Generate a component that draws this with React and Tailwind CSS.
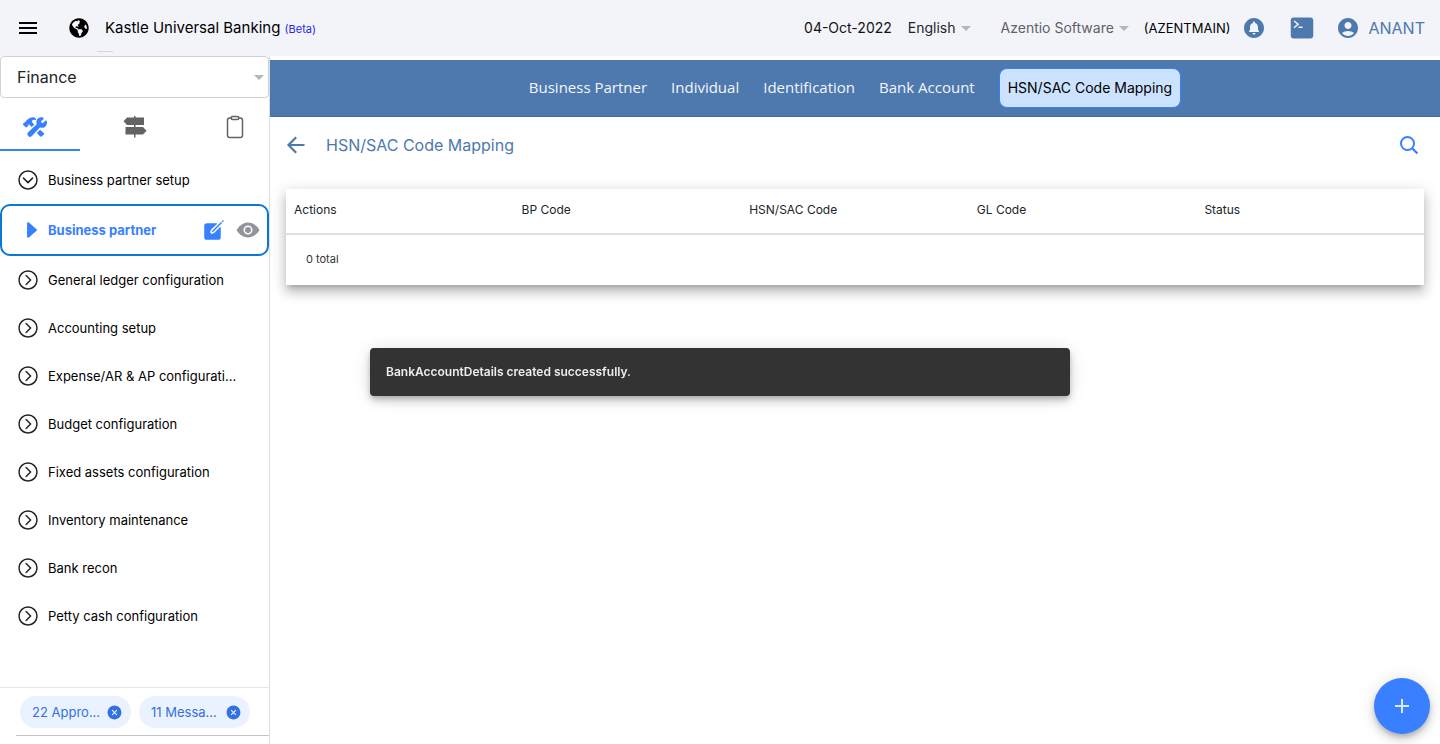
import { MdMenu, MdCircleNotifications, MdAccountCircle } from "react-icons/md";
import { FaGlobeAmericas } from "react-icons/fa";
import {
  IoConstruct,
  IoClipboardOutline,
  IoChevronDownCircleOutline,
  IoChevronForwardCircleOutline,
  IoCaretForward,
  IoCreate,
  IoEye,
  IoTerminal,
  IoCloseCircle,
} from "react-icons/io5";

const groups = [
  "General ledger configuration",
  "Accounting setup",
  "Expense/AR & AP configurati...",
  "Budget configuration",
  "Fixed assets configuration",
  "Inventory maintenance",
  "Bank recon",
  "Petty cash configuration",
];

const steps = ["Business Partner", "Individual", "Identification", "Bank Account"];
const columns = ["Actions", "BP Code", "HSN/SAC Code", "GL Code", "Status"];
const chips = ["22 Appro...", "11 Messa..."];

function Caret() {
  return (
    <svg viewBox="0 0 10 5" className="pointer-events-none h-[5px] w-[10px] shrink-0 text-[#b4b6b9]" aria-hidden="true">
      <path d="M0 0h10L5 5z" fill="currentColor" />
    </svg>
  );
}

function SignpostIcon() {
  return (
    <svg viewBox="0 0 24 22" className="h-[22px] w-6" fill="#636363" aria-hidden="true">
      <path d="M11 0h1.500v1.500H21V9h-8.500v2H20l3.500 3.800L20 18.500h-7.500V21.500H11v-3H2.500V11H11V9H4L.5 5.300 4 1.500h7z" />
    </svg>
  );
}

function BackIcon() {
  return (
    <svg viewBox="0 0 24 24" className="size-6" fill="none" stroke="currentColor" strokeWidth="2.200" aria-hidden="true">
      <path d="M20.500 12H5M12.200 4.300L4.500 12l7.700 7.700" />
    </svg>
  );
}

function SearchIcon() {
  return (
    <svg viewBox="0 0 24 24" className="size-6" fill="none" stroke="currentColor" strokeWidth="2" aria-hidden="true">
      <circle cx="10.500" cy="10.500" r="6.500" />
      <path d="M15.200 15.200l5.300 5.300" strokeWidth="2.200" />
    </svg>
  );
}

function HeaderSelect({ label, value, className }) {
  return (
    <label className={"flex items-center gap-[5px] " + className}>
      <select aria-label={label} className="field-sizing-content appearance-none bg-transparent outline-none">
        <option>{value}</option>
      </select>
      <Caret />
    </label>
  );
}

function Header() {
  return (
    <header className="flex h-14 shrink-0 items-center justify-between bg-[#f3f4f9] pl-4 pr-[15px]">
      <div className="relative flex items-center">
        <button aria-label="Menu" className="text-black">
          <MdMenu size={24} />
        </button>
        <FaGlobeAmericas size={20} className="ml-[29px] text-black" />
        <h1 className="ml-4 text-[15px] text-black">
          Kastle Universal Banking <span className="text-[11px] text-[#2a1ff0]">(Beta)</span>
        </h1>
        <span className="absolute left-[81px] top-[35px] h-px w-4 bg-[#d5d6dc]" />
      </div>
      <div className="flex items-center text-sm">
        <span className="text-[#111]">04-Oct-2022</span>
        <HeaderSelect label="Language" value="English" className="ml-4 text-[#222428]" />
        <HeaderSelect label="Organisation" value="Azentio Software" className="ml-[30px] text-[#5f6166]" />
        <span className="ml-[15px] text-[13px] text-black">(AZENTMAIN)</span>
        <button aria-label="Notifications" className="ml-3 text-[#4d79af]">
          <MdCircleNotifications size={24} />
        </button>
        <button aria-label="Terminal" className="ml-6 text-[#4d79af]">
          <IoTerminal size={24} />
        </button>
        <button className="ml-[22px] flex items-center gap-2 text-base text-[#4d79af]">
          <MdAccountCircle size={24} />
          ANANT
        </button>
      </div>
    </header>
  );
}

function Sidebar() {
  return (
    <aside className="flex w-[270px] shrink-0 flex-col border-r border-[#dcdcdc] bg-white">
      <label className="flex h-[42px] items-center rounded border border-[#d0d1d9] pl-4 pr-1">
        <select aria-label="Module" className="flex-1 appearance-none bg-transparent text-base text-[#222428] outline-none">
          <option>Finance</option>
        </select>
        <Caret />
      </label>

      <div className="flex h-[53px]" role="tablist">
        <button role="tab" aria-selected="true" aria-label="Setup" className="flex w-20 items-center justify-center border-b-2 border-[#3880ff] pr-2.5 pt-1.5 text-[#3880ff]">
          <IoConstruct size={24} />
        </button>
        <button role="tab" aria-selected="false" aria-label="Directions" className="flex w-[110px] items-center justify-center pt-1">
          <SignpostIcon />
        </button>
        <button role="tab" aria-selected="false" aria-label="Tasks" className="flex flex-1 items-center justify-center pl-2.5 pt-1 text-[#636363]">
          <IoClipboardOutline size={24} />
        </button>
      </div>

      <nav className="mt-[5px] flex flex-1 flex-col text-[13px] text-black">
        <button className="flex h-12 items-center gap-2 px-4 text-left">
          <IoChevronDownCircleOutline size={24} className="shrink-0 text-[#222428]" />
          Business partner setup
        </button>
        <div className="flex h-[52px] items-center rounded-[10px] border-2 border-[#0d78d0] pl-[18px] pr-[7px]">
          <a href="#business-partner" className="flex flex-1 items-center gap-1 font-bold text-[#3880ff]">
            <IoCaretForward size={24} />
            Business partner
          </a>
          <button aria-label="Edit" className="text-[#3880ff]">
            <IoCreate size={24} />
          </button>
          <button aria-label="View" className="ml-2.5 text-[#92949c]">
            <IoEye size={24} />
          </button>
        </div>
        {groups.map((name) => (
          <button key={name} className="flex h-12 items-center gap-2 px-4 text-left">
            <IoChevronForwardCircleOutline size={24} className="shrink-0 text-[#222428]" />
            <span className="whitespace-nowrap">{name}</span>
          </button>
        ))}
      </nav>

      <footer className="border-t border-[#e6e6e6] pb-2 pl-4 pt-2">
        <div className="flex gap-2 border-b border-[#c4c4c4] pb-[7px] pl-1">
          {chips.map((chip) => (
            <button key={chip} className="flex h-8 w-[111px] items-center justify-between rounded-full bg-[#ebf2ff] pl-3 pr-2 text-[13px] text-[#3171e0]">
              <span className="whitespace-nowrap">{chip}</span>
              <IoCloseCircle size={17} className="shrink-0" />
            </button>
          ))}
        </div>
      </footer>
    </aside>
  );
}

function Main() {
  return (
    <main className="min-w-0 flex-1 pt-1">
      <nav className="flex h-[57px] items-center justify-center gap-6 border-b border-[#426fa6] bg-[#4d79af] font-['Open_Sans',sans-serif] text-[15px] text-[#f4f5f8]">
        {steps.map((step) => (
          <a key={step} href="#step">
            {step}
          </a>
        ))}
        <a href="#mapping" aria-current="page" className="flex h-10 items-center rounded-lg border border-[#3880ff] bg-[#cce3ff] px-2 font-['Inter',sans-serif] text-sm text-black">
          HSN/SAC Code Mapping
        </a>
      </nav>

      <div className="flex h-14 items-center pl-3.5 pr-[19px]">
        <button aria-label="Back" className="text-[#4d79af]">
          <BackIcon />
        </button>
        <h2 className="ml-[18px] flex-1 text-base text-[#4d79af]">HSN/SAC Code Mapping</h2>
        <button aria-label="Search" className="text-[#3880ff]">
          <SearchIcon />
        </button>
      </div>

      <section className="mx-4 mt-4 bg-white shadow-[0_5px_5px_-3px_rgba(0,0,0,0.2),0_8px_10px_1px_rgba(0,0,0,0.14),0_3px_14px_2px_rgba(0,0,0,0.12)]">
        <table className="w-full table-fixed">
          <thead>
            <tr className="border-b-2 border-[#dfe0e1]">
              {columns.map((name) => (
                <th key={name} scope="col" className="h-[45px] px-2 pb-0.5 text-left text-xs font-normal text-[#222428]">
                  {name}
                </th>
              ))}
            </tr>
          </thead>
        </table>
        <p className="flex h-[50px] items-center pl-5 text-[11px] text-[#333]">0 total</p>
      </section>
    </main>
  );
}

export default function App() {
  return (
    <div className="flex min-h-screen flex-col bg-white font-['Inter',sans-serif] text-sm">
      <Header />
      <div className="flex flex-1">
        <Sidebar />
        <Main />
      </div>
      <div role="status" className="fixed left-1/2 top-1/2 flex h-12 w-full max-w-[700px] -translate-x-1/2 -translate-y-1/2 items-center rounded bg-[#333] px-4 text-xs font-semibold text-[#ededed] shadow-[0_3px_5px_-1px_rgba(0,0,0,0.2),0_6px_10px_0_rgba(0,0,0,0.14),0_1px_18px_0_rgba(0,0,0,0.12)]">
        BankAccountDetails created successfully.
      </div>
      <button aria-label="Add" className="fixed bottom-2.5 right-2.5 flex size-14 items-center justify-center rounded-full bg-[#3880ff] text-white shadow-[0_3px_5px_-1px_rgba(0,0,0,0.2),0_6px_10px_0_rgba(0,0,0,0.14),0_1px_18px_0_rgba(0,0,0,0.12)]">
        <svg viewBox="0 0 16 16" className="size-4" aria-hidden="true">
          <path d="M8 1v14M1 8h14" stroke="#dbe8ff" strokeWidth="2" />
        </svg>
      </button>
    </div>
  );
}
